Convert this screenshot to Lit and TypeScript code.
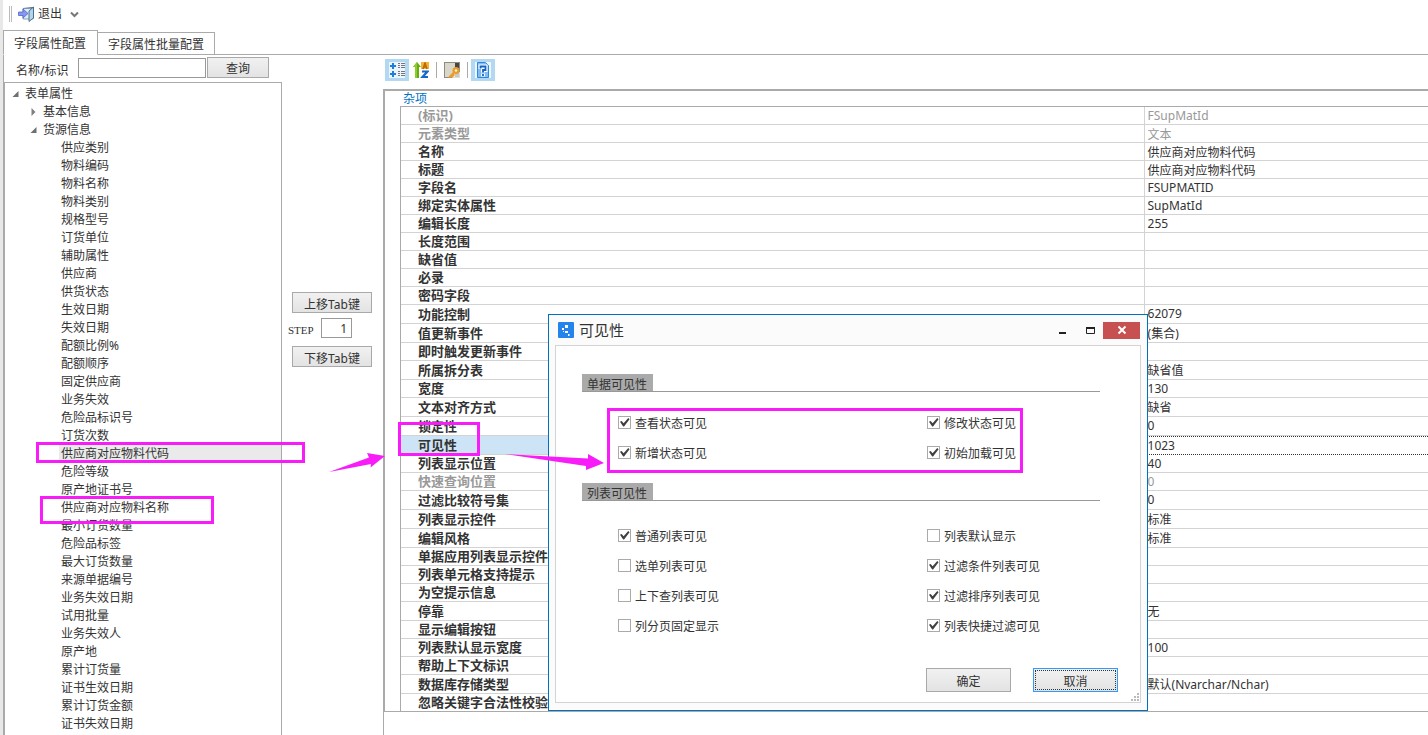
import { LitElement, html, css, svg, nothing } from "lit";
import { customElement, property, state } from "lit/decorators.js";
import { classMap } from "lit/directives/class-map.js";

const FIELDS = [
  "供应类别", "物料编码", "物料名称", "物料类别", "规格型号", "订货单位", "辅助属性", "供应商",
  "供货状态", "生效日期", "失效日期", "配额比例%", "配额顺序", "固定供应商", "业务失效",
  "危险品标识号", "订货次数", "供应商对应物料代码", "危险等级", "原产地证书号",
  "供应商对应物料名称", "最小订货数量", "危险品标签", "最大订货数量", "来源单据编号",
  "业务失效日期", "试用批量", "业务失效人", "原产地", "累计订货量", "证书生效日期",
  "累计订货金额", "证书失效日期",
];

type Prop = { name: string; value?: string; off?: boolean; tall?: boolean };

const PROPS: Prop[] = [
  { name: "(标识)", value: "FSupMatId", off: true },
  { name: "元素类型", value: "文本", off: true },
  { name: "名称", value: "供应商对应物料代码" },
  { name: "标题", value: "供应商对应物料代码" },
  { name: "字段名", value: "FSUPMATID" },
  { name: "绑定实体属性", value: "SupMatId" },
  { name: "编辑长度", value: "255" },
  { name: "长度范围" },
  { name: "缺省值" },
  { name: "必录" },
  { name: "密码字段" },
  { name: "功能控制", value: "62079", tall: true },
  { name: "值更新事件", value: "(集合)", tall: true },
  { name: "即时触发更新事件" },
  { name: "所属拆分表", value: "缺省值", tall: true },
  { name: "宽度", value: "130" },
  { name: "文本对齐方式", value: "缺省", tall: true },
  { name: "锁定性", value: "0", tall: true },
  { name: "可见性", value: "1023", tall: true },
  { name: "列表显示位置", value: "40" },
  { name: "快速查询位置", value: "0", off: true },
  { name: "过滤比较符号集", value: "0", tall: true },
  { name: "列表显示控件", value: "标准", tall: true },
  { name: "编辑风格", value: "标准", tall: true },
  { name: "单据应用列表显示控件" },
  { name: "列表单元格支持提示" },
  { name: "为空提示信息" },
  { name: "停靠", value: "无", tall: true },
  { name: "显示编辑按钮" },
  { name: "列表默认显示宽度", value: "100" },
  { name: "帮助上下文标识" },
  { name: "数据库存储类型", value: "默认(Nvarchar/Nchar)", tall: true },
  { name: "忽略关键字合法性校验" },
];

const HAN = /[\u4e00-\u9fff]/;

const base = css`
  *, *::before { box-sizing: border-box; }
  :host { font: 12px/18px "Noto Sans", "Noto Sans CJK SC", sans-serif; color: #333; }
  button, input { font: inherit; color: inherit; margin: 0; padding: 0; border-radius: 0; outline: none; }
  .btn { border: 1px solid #a9a9a9; background: linear-gradient(#f1f1f1, #e3e3e3); text-align: center; padding-top: 2px; }
`;

@customElement("field-tree")
class FieldTree extends LitElement {
  @state() private selected = "供应商对应物料代码";

  static styles = [base, css`
    :host { display: block; flex: 1; min-height: 0; overflow: hidden; border: 1px solid #aaa; border-bottom: 0; padding-top: 2px; }
    ul { list-style: none; margin: 0; padding: 0; }
    .row { display: flex; align-items: center; height: 18px; white-space: nowrap; }
    .l0 { padding-left: 7px; }
    .l1 { padding-left: 25px; }
    .leaf { margin-left: 54px; padding-left: 2px; cursor: default; }
    .leaf.on { background: #eaeaea; }
    .arrow { width: 13px; height: 8px; flex: none; }
  `];

  render() {
    const open = html`<svg class="arrow" viewBox="0 0 13 8"><path d="M6.5 1v6h-6z" fill="#6f6f6f"/></svg>`;
    const shut = html`<svg class="arrow" viewBox="0 0 13 8"><path d="M1.5 0l4 4-4 4z" fill="#808080"/></svg>`;
    return html`
      <ul role="tree">
        <li role="treeitem" aria-expanded="true">
          <div class="row l0">${open}表单属性</div>
          <ul role="group">
            <li role="treeitem" aria-expanded="false"><div class="row l1">${shut}基本信息</div></li>
            <li role="treeitem" aria-expanded="true">
              <div class="row l1">${open}货源信息</div>
              <ul role="group">
                ${FIELDS.map((f) => html`<li role="treeitem" class=${classMap({ row: true, leaf: true, on: f === this.selected })}
                  @click=${() => (this.selected = f)}>${f}</li>`)}
              </ul>
            </li>
          </ul>
        </li>
      </ul>`;
  }
}

@customElement("property-grid")
class PropertyGrid extends LitElement {
  @property() current = "可见性";

  static styles = [base, css`
    :host { display: flex; flex-direction: column; min-width: 0; }
    .tools { display: flex; align-items: center; height: 34px; padding: 0 0 4px 2px; }
    .tool { width: 24px; height: 22px; border: 0; background: none; display: grid; place-items: center; }
    .tool.on { background: #b3d8f2; }
    .tool svg { width: 16px; height: 16px; display: block; }
    .bar { width: 1px; height: 16px; margin: 0 3px; background: #aaa; }
    .frame { flex: 1; border: solid #aaa; border-width: 1px 0 0 1px; }
    .grid { border: 1px solid #aaa; border-right: 0; }
    .cat { height: 15px; line-height: 15px; padding-left: 18px; color: #0072c6; }
    .shell { padding-left: 15px; }
    table { width: 100%; table-layout: fixed; border-spacing: 0; border-left: 1px solid #aaa; border-top: 1px solid #aaa; }
    .vcol { width: 27.7%; }
    th, td { height: 18px; padding: 0; border-bottom: 1px solid #d3d3d3; line-height: 17px; text-align: left; white-space: nowrap; overflow: hidden; }
    th { padding-left: 17px; font-size: 13px; font-weight: 700; }
    td { padding-left: 3px; border-left: 1px solid #d3d3d3; }
    .tall th, .tall td { height: 19px; line-height: 18px; }
    td.han { padding-top: 2px; line-height: 15px; }
    .tall td.han { line-height: 16px; }
    .off th, .off td { color: #999; }
    .cur th { background: #cde4f7; }
    .tall.cur td { border-top: 1px dotted #333; border-bottom: 1px dotted #333; line-height: 17px; }
    tr:last-child th, tr:last-child td { border-bottom: 0; height: 17px; }
  `];

  render() {
    return html`
      <div class="tools" role="toolbar">
        <button class="tool on" aria-label="按分类顺序">
          <svg viewBox="0 0 16 16"><rect width="16" height="16" fill="#fff" opacity=".75"/>
            <path d="M1 4h6M4 1v6M1 12h6M4 9v6" stroke="#1b7fe0" stroke-width="2"/>
            <path d="M9 1.5h2M12 1.5h4M9 3.500h2M12 3.500h4M9 5.500h2M12 5.500h4M9 9.500h2M12 9.500h4M9 11.500h2M12 11.500h4M9 13.500h2M12 13.500h4" stroke="#777"/></svg>
        </button>
        <button class="tool" aria-label="按字母顺序">
          <svg viewBox="0 0 16 16"><path d="M4 0l4 5H6v11H2V5H0z" fill="#65ad12"/><path d="M4 0v16H2V5H0z" fill="#8ccd2b"/>
            <path d="M8 0h8v7H8z" fill="#f3b338"/><path d="M10 7l2-6 2 6M10.500 5h3" stroke="#b96b00" stroke-width="1.500" fill="none"/>
            <path d="M9 9.500h5.500L9.500 15H15" stroke="#1469c9" stroke-width="2.200" fill="none"/></svg>
        </button>
        <span class="bar"></span>
        <button class="tool" aria-label="属性页">
          <svg viewBox="0 0 16 16"><path d="M0 0h16v16H0z" fill="#8e8c80"/><path d="M1 1h10v14H1z" fill="#d9d7c9"/><path d="M11 1h4v14h-4z" fill="#47463f"/>
            <path d="M10 10h6v6H8z" fill="#fff" opacity=".7"/>
            <circle cx="12" cy="8.500" r="2.400" fill="#fff1d0" stroke="#eb9b27" stroke-width="2.200"/><path d="M10 10.500L6 14.500h2.500l.500-1.500h1.500" fill="none" stroke="#eb9b27" stroke-width="1.800"/></svg>
        </button>
        <span class="bar"></span>
        <button class="tool on" aria-label="帮助">
          <svg viewBox="0 0 16 16"><rect x="0" y="0" width="16" height="16" fill="#eef7ff"/><path d="M2.500 .5h8l3 3v12h-11z" fill="#7dbcf4" stroke="#2f86dc"/>
            <path d="M5.500 7V4.500h5V8H8v2.500M8 11.500v3" stroke="#fff" stroke-width="4" fill="none"/><path d="M5.500 6.500v-2h5V8H8v2.500M8 12v2" stroke="#1462c4" stroke-width="1.800" fill="none"/></svg>
        </button>
      </div>
      <div class="frame">
        <div class="grid">
          <div class="cat">杂项</div>
          <div class="shell">
            <table>
              <colgroup><col /><col class="vcol" /></colgroup>
              <tbody>
                ${PROPS.map((p) => html`<tr class=${classMap({ off: !!p.off, tall: !!p.tall, cur: p.name === this.current })}>
                  <th scope="row">${p.name}</th><td class=${classMap({ han: HAN.test(p.value ?? "") })}>${p.value ?? nothing}</td></tr>`)}
              </tbody>
            </table>
          </div>
        </div>
      </div>`;
  }
}

const GROUPS: { title: string; items: [string, boolean][] }[] = [
  { title: "单据可见性", items: [["查看状态可见", true], ["修改状态可见", true], ["新增状态可见", true], ["初始加载可见", true]] },
  {
    title: "列表可见性",
    items: [["普通列表可见", true], ["列表默认显示", false], ["选单列表可见", false], ["过滤条件列表可见", true],
      ["上下查列表可见", false], ["过滤排序列表可见", true], ["列分页固定显示", false], ["列表快捷过滤可见", true]],
  },
];

@customElement("visibility-dialog")
class VisibilityDialog extends LitElement {
  static styles = [base, css`
    :host { display: block; width: 600px; border: 1px solid #0070c0; background: #fbfbfb; padding: 0 6px 7px; }
    .title { display: flex; align-items: center; height: 30px; padding-right: 1px; }
    .logo { width: 16px; height: 16px; margin: 0 5px 0 3px; }
    h2 { flex: 1; margin: 0; font-size: 15px; font-weight: 400; }
    .cap { width: 27px; height: 18px; border: 0; background: none; display: grid; place-items: center; }
    .cap svg { width: 12px; height: 12px; display: block; }
    .close { width: 37px; height: 17px; background: #c75050; }
    .body { position: relative; border: 1px solid #d4d4d4; background: #fff; padding: 28px 22px 10px 26px; }
    fieldset { border: 0; margin: 0 18px 16px 0; padding: 0; min-width: 0; }
    .head { display: flex; border-bottom: 1px solid #999; }
    .head span { background: #aaa; height: 17px; line-height: 21px; padding: 0 6px 0 5px; }
    .checks { display: grid; grid-template-columns: 309px 1fr; grid-auto-rows: 30px; padding-left: 36px; margin-top: 15px; }
    .roomy { margin-top: 19px; }
    label { display: flex; align-items: center; gap: 4px; }
    label span { padding-top: 4px; }
    .checks input { appearance: none; width: 13px; height: 13px; border: 1px solid #aaa; background: #fff; }
    .checks input:checked::before { content: ""; display: block; height: 11px; background: #404040; clip-path: polygon(9% 48%, 24% 40%, 42% 62%, 84% 14%, 96% 24%, 46% 92%, 38% 92%); }
    .foot { display: flex; justify-content: flex-end; gap: 22px; padding-top: 12px; }
    .foot .btn { width: 85px; height: 24px; padding-top: 3px; }
    .foot .main { border-color: #3399ff; padding: 1px; }
    .main span { display: block; height: 20px; border: 1px dotted #333; line-height: 21px; }
    .grip { position: absolute; right: 0; bottom: 0; width: 9px; height: 9px; }
  `];

  render() {
    return html`
      <div class="title">
        <svg class="logo" viewBox="0 0 16 16"><rect width="16" height="16" rx="1" fill="#2484ec"/>
          <path d="M7 3h3v3H7zM4 6h2v2H4zM7 9h3v2H7zM10 12h1.500v2H10zM5 9h1v1H5z" fill="#fff"/></svg>
        <h2 id="t">可见性</h2>
        <button class="cap" aria-label="最小化"><svg viewBox="0 0 12 12"><path d="M2 8h7v2H2z" fill="#222"/></svg></button>
        <button class="cap" aria-label="最大化"><svg viewBox="0 0 12 12"><path d="M2.500 3.500v6h8v-6z" fill="none" stroke="#222"/><path d="M2 3h9v2H2z" fill="#222"/></svg></button>
        <button class="cap close" aria-label="关闭"><svg viewBox="0 0 12 12"><path d="M2.500 2.500l7 7M9.500 2.500l-7 7" stroke="#fff" stroke-width="2"/></svg></button>
      </div>
      <div class="body" role="dialog" aria-labelledby="t">
        ${GROUPS.map((g, i) => html`<fieldset aria-label=${g.title}>
          <div class="head"><span>${g.title}</span></div>
          <div class=${classMap({ checks: true, roomy: i === 1 })}>
            ${g.items.map(([name, on]) => html`<label><input type="checkbox" .checked=${on} /><span>${name}</span></label>`)}
          </div></fieldset>`)}
        <div class="foot">
          <button class="btn">确定</button>
          <button class="btn main"><span>取消</span></button>
        </div>
        <svg class="grip" viewBox="0 0 9 9"><path d="M6 0h2v2H6zM3 3h2v2H3zM6 3h2v2H6zM0 6h2v2H0zM3 6h2v2H3zM6 6h2v2H6z" fill="#bbb"/></svg>
      </div>`;
  }
}

@customElement("app-root")
class AppRoot extends LitElement {
  static styles = [base, css`
    :host { display: flex; flex-direction: column; height: 100vh; overflow: hidden; position: relative; background: #fff; border-left: 3px solid #e8e8e8; box-sizing: border-box; }
    .toolbar { display: flex; align-items: center; height: 30px; padding: 0 0 2px 6px; flex: none; }
    .handle { width: 3px; height: 16px; border: solid #bbb; border-width: 0 1px; margin-right: 6px; }
    .exit { display: flex; align-items: center; gap: 4px; border: 0; background: none; }
    .exit svg { width: 16px; height: 16px; }
    .more { border: 0; background: none; margin-left: 8px; display: flex; }
    .more svg { width: 9px; height: 7px; }
    .tabs { display: flex; align-items: flex-end; height: 25px; flex: none; border-bottom: 1px solid #aaa; }
    .tab { height: 23px; padding: 2px 10px 0; border: 1px solid #aaa; border-left: 0; background: #fff; margin-bottom: -1px; }
    .tab.on { height: 25px; padding: 2px 11px 0 10px; border-left: 1px solid #aaa; border-bottom-color: #fff; }
    .main { flex: 1; min-height: 0; display: grid; grid-template-columns: 279px 101px minmax(0, 1fr); grid-template-rows: minmax(0, 1fr); }
    .left { display: flex; flex-direction: column; min-height: 0; border-left: 1px solid #aaa; }
    .search { display: flex; height: 27px; padding: 2px 13px 4px 12px; }
    .search label { width: 62px; line-height: 28px; }
    .search input { flex: 1; min-width: 0; height: 20px; margin-top: 1px; border: 1px solid #999; background: #fff; }
    .search .btn { width: 62px; height: 21px; margin-left: 1px; }
    .move { display: flex; flex-direction: column; gap: 5px; padding: 237px 11px 0 6px; }
    .move .btn { height: 21px; margin-left: 4px; line-height: 19px; }
    .step { display: flex; justify-content: space-between; height: 23px; padding-right: 20px; }
    .step label { font-family: "Liberation Serif", serif; font-size: 11px; line-height: 24px; }
    .step input { width: 31px; height: 20px; border: 1px solid #999; text-align: right; padding-right: 4px; background: #fff; }
    .dialog { position: absolute; left: 545px; top: 314px; }
    .marks { position: absolute; left: -3px; top: 0; width: 1428px; height: 735px; pointer-events: none; }
  `];

  render() {
    const box = (x: number, y: number, w: number, h: number) =>
      svg`<rect x=${x + 1.5} y=${y + 1.5} width=${w - 3} height=${h - 3} fill="none" stroke="#f81cf8" stroke-width="3"/>`;
    return html`
      <div class="toolbar" role="toolbar">
        <span class="handle"></span>
        <button class="exit">
          <svg viewBox="0 0 16 16"><path d="M5 2.500l10-1V13" fill="none" stroke="#49687c"/><path d="M5 2.500h9.500v10.500H5z" fill="#dfeef8" stroke="#6b8ba5" stroke-width=".8"/>
            <path d="M15.500 1v11l-4.500 3.500V5z" fill="#b5d3ea" stroke="#3f6580" stroke-width=".9"/>
            <path d="M.5 6H5V3l5 4.500L5 12V9.500H.5z" fill="#8797f0" stroke="#5064cf" stroke-width=".8"/></svg>
          退出
        </button>
        <button class="more" aria-label="更多"><svg viewBox="0 0 9 7"><path d="M1 1.500l3.500 3.500L8 1.500" fill="none" stroke="#777" stroke-width="2"/></svg></button>
      </div>
      <div class="tabs" role="tablist">
        <button class="tab on" role="tab" aria-selected="true">字段属性配置</button>
        <button class="tab" role="tab" aria-selected="false">字段属性批量配置</button>
      </div>
      <div class="main">
        <div class="left">
          <div class="search">
            <label for="q">名称/标识</label><input id="q" type="text" /><button class="btn">查询</button>
          </div>
          <field-tree></field-tree>
        </div>
        <div class="move">
          <button class="btn">上移Tab键</button>
          <div class="step"><label for="s">STEP</label><input id="s" type="text" value="1" /></div>
          <button class="btn">下移Tab键</button>
        </div>
        <property-grid></property-grid>
      </div>
      <visibility-dialog class="dialog"></visibility-dialog>
      <svg class="marks" viewBox="0 0 1428 735" aria-hidden="true">
        ${box(36, 442, 269, 21)}${box(40, 496, 174, 28)}${box(398, 422, 82, 34)}${box(607, 408, 416, 65)}
        <path d="M329 472L369 457.500L367 453L385 456L370.500 467.500L371 464Z" fill="#f81cf8"/>
        <path d="M505 454L588 458.500V454L604 463L586 470V466Z" fill="#f81cf8"/>
      </svg>`;
  }
}
